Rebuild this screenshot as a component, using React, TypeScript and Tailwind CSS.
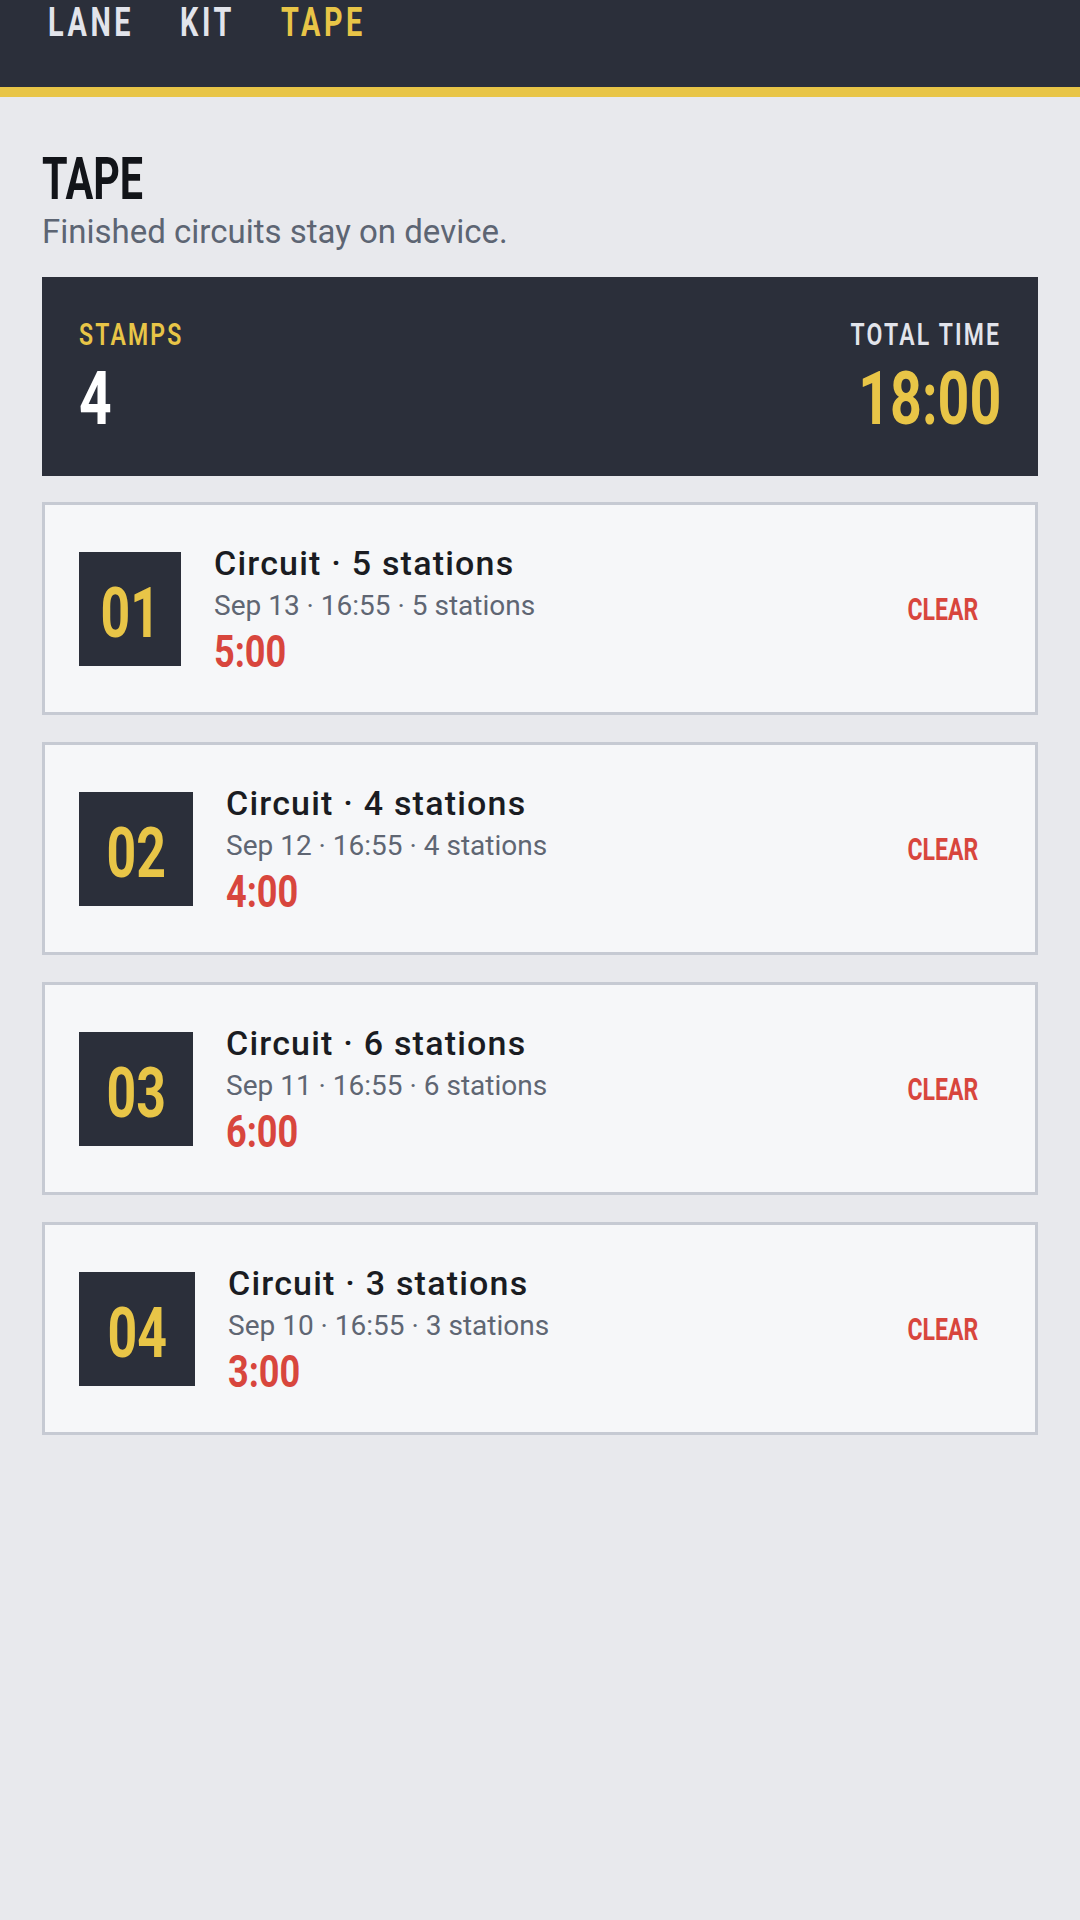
import React from 'react';

// no condensed face is installed, so Roboto is narrowed with scale-x
const COND = "font-['Roboto','Liberation_Sans',sans-serif] inline-block";
const BODY = "font-['Roboto','Noto_Sans',sans-serif]";

const ENTRIES = [
  { num: '01', title: 'Circuit · 5 stations', meta: 'Sep 13 · 16:55 · 5 stations', time: '5:00', box: 'w-[102px]' },
  { num: '02', title: 'Circuit · 4 stations', meta: 'Sep 12 · 16:55 · 4 stations', time: '4:00', box: 'w-[114px]' },
  { num: '03', title: 'Circuit · 6 stations', meta: 'Sep 11 · 16:55 · 6 stations', time: '6:00', box: 'w-[114px]' },
  { num: '04', title: 'Circuit · 3 stations', meta: 'Sep 10 · 16:55 · 3 stations', time: '3:00', box: 'w-[116px]' },
];

function TopNav() {
  return (
    <header>
      <nav className="h-[87px] bg-[#2b2f3a] flex items-start pl-[48px] pt-[3px]">
        <div className="w-[132px]">
          <span className={`${COND} origin-left scale-x-[0.72] text-[40px] leading-none font-bold tracking-[5px] text-[#e2e4eb]`}>LANE</span>
        </div>
        <div className="w-[101px]">
          <span className={`${COND} origin-left scale-x-[0.72] text-[40px] leading-none font-bold tracking-[5px] text-[#e2e4eb]`}>KIT</span>
        </div>
        <div>
          <span className={`${COND} origin-left scale-x-[0.72] text-[40px] leading-none font-bold tracking-[5px] text-[#e8c547]`}>TAPE</span>
        </div>
      </nav>
      <div className="h-[10px] bg-[#e8c547]" />
    </header>
  );
}

export default function App() {
  return (
    <div className="min-h-screen bg-[#e8e9ed]">
      <TopNav />
      <main className="px-[42px]">
        <h1 className="mt-[52px] leading-none">
          <span className={`${COND} origin-left scale-x-[0.7] text-[59px] leading-none font-bold text-[#121419]`}>TAPE</span>
        </h1>
        <p className={`mt-[7px] text-[33px] leading-none text-[#5d6573] ${BODY}`}>Finished circuits stay on device.</p>

        <section className="mt-[29px] h-[199px] bg-[#2b2f3a] px-[37px] flex justify-between">
          <div className="pt-[41px] flex flex-col items-start">
            <span className={`${COND} origin-left scale-x-[0.72] text-[32px] leading-none font-semibold tracking-[3px] text-[#e8c547]`}>STAMPS</span>
            <span className={`${COND} origin-left scale-x-[0.76] mt-[11px] text-[75px] leading-none font-bold text-white`}>4</span>
          </div>
          <div className="pt-[41px] flex flex-col items-end">
            <span className={`${COND} origin-right scale-x-[0.72] text-[32px] leading-none font-semibold tracking-[3px] text-[#e2e4eb]`}>TOTAL TIME</span>
            <span className={`${COND} origin-right scale-x-[0.74] mt-[11px] text-[75px] leading-none font-bold text-[#e8c547]`}>18:00</span>
          </div>
        </section>

        <ul className="mt-[26px] flex flex-col gap-[27px]">
          {ENTRIES.map((e) => (
            <li
              key={e.num}
              className="h-[213px] border-[3px] border-[#c6cad3] bg-[#f6f7f9] flex items-center pl-[34px] pr-[37px]"
            >
              <div className={`${e.box} h-[114px] shrink-0 bg-[#2b2f3a] flex items-center justify-center pt-[8px]`}>
                <span className={`${COND} scale-x-[0.74] text-[70px] leading-none font-bold text-[#e8c547]`}>{e.num}</span>
              </div>
              <div className="ml-[33px] flex flex-col items-start">
                <div className={`text-[34px] leading-[40px] font-medium tracking-[1.2px] text-[#1a1c22] ${BODY}`}>{e.title}</div>
                <div className={`mt-[5px] text-[28px] leading-[36px] text-[#5f6673] ${BODY}`}>{e.meta}</div>
                <span className={`${COND} origin-left scale-x-[0.82] mt-[6px] text-[44px] leading-none font-bold text-[#d8463d]`}>{e.time}</span>
              </div>
              <button className="ml-auto px-[20px] py-[10px] flex justify-end">
                <span className={`${COND} origin-right scale-x-[0.72] text-[32px] leading-none font-bold text-[#d8463d]`}>CLEAR</span>
              </button>
            </li>
          ))}
        </ul>
      </main>
    </div>
  );
}
